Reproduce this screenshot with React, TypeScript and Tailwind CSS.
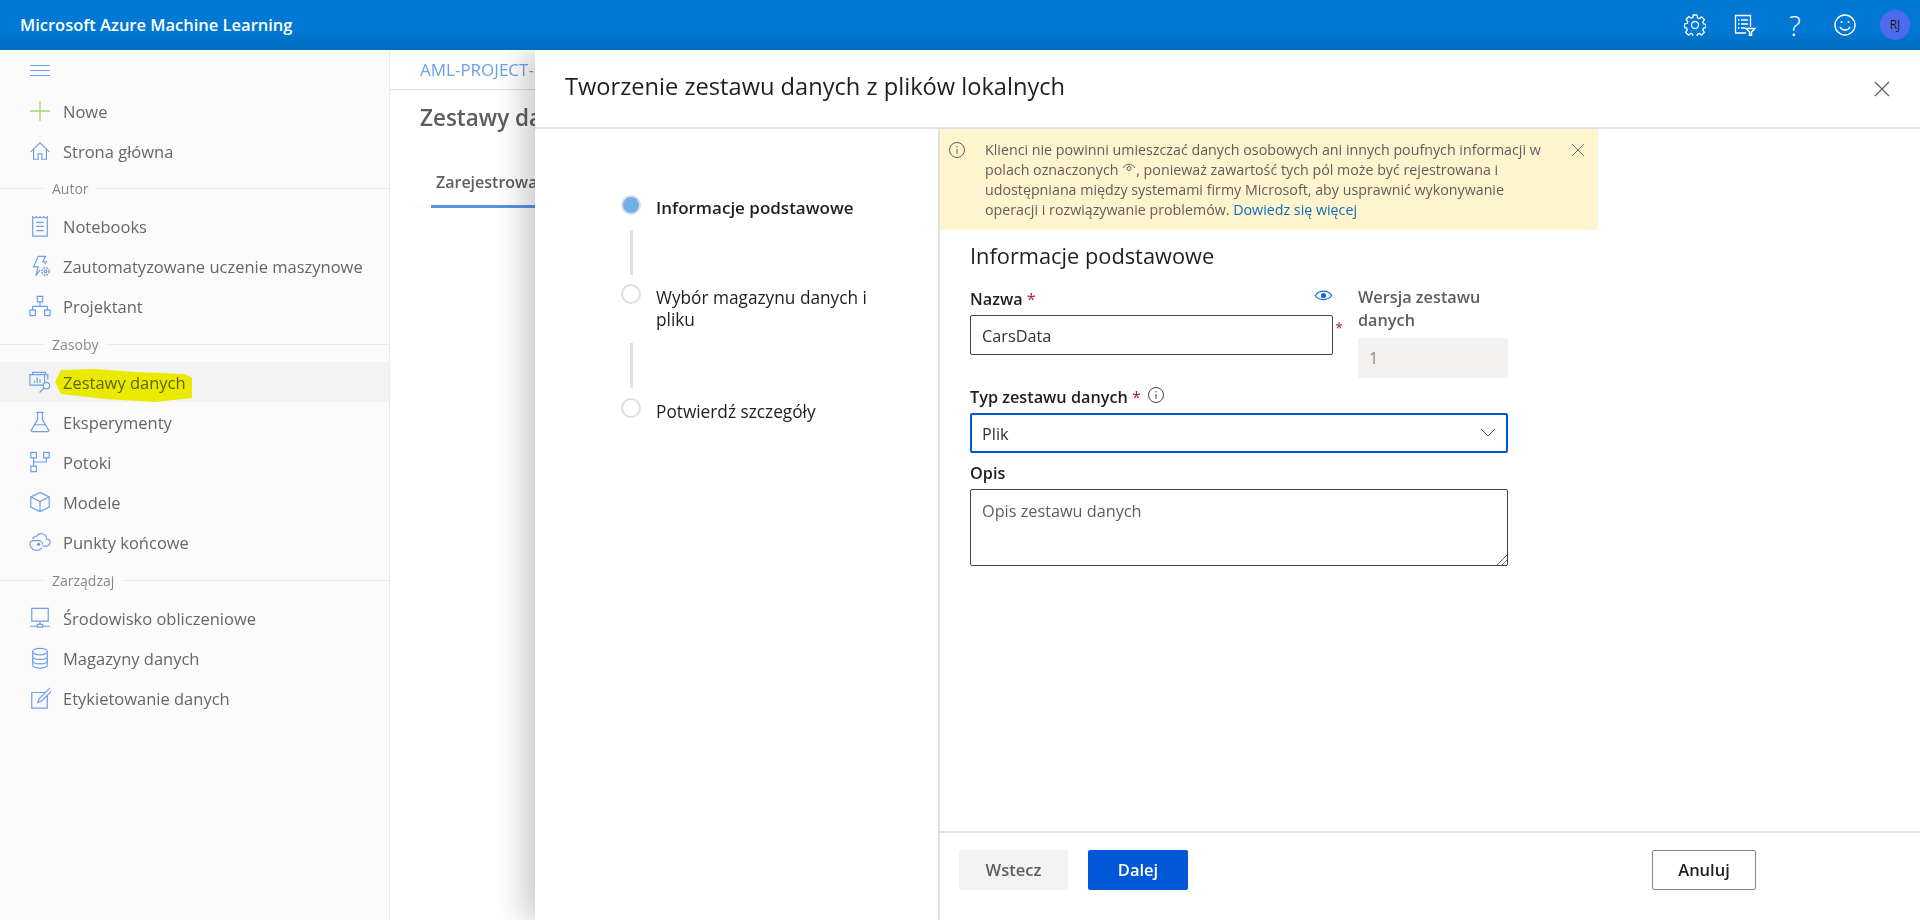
import type { ReactNode } from "react";

const font = "font-['Open_Sans','Noto_Sans',sans-serif]";

const Ic = ({ children, c = "#6f9fe8", s = 22 }: { children: ReactNode; c?: string; s?: number }) => (
  <svg width={s} height={s} viewBox="0 0 24 24" fill="none" stroke={c} strokeWidth="1.3">
    {children}
  </svg>
);

const icons: Record<string, ReactNode> = {
  plus: (
    <Ic c="#a8d57e">
      <path d="M12 1v22M1 12h22" strokeWidth="1.5" />
    </Ic>
  ),
  home: (
    <Ic>
      <path d="M2 13 12 3l10 10M5 10.500V21h5v-6h4v6h5V10.500" />
    </Ic>
  ),
  notebook: (
    <Ic>
      <path d="M4 3h16v20H4zM4 1v2M8 1v2M12 1v2M16 1v2M20 1v2M8 8h8M8 12.500h8M8 17h8" />
    </Ic>
  ),
  automl: (
    <Ic>
      <path d="M10 1.500h8l-3 6h4l-1.500 2.500M10 1.500 5 13h5L7.500 22.500l4.500-6" />
      <circle cx="18" cy="18" r="1.500" />
      <circle cx="18" cy="18" r="4" strokeDasharray="2 1.200" strokeWidth="1.600" />
    </Ic>
  ),
  designer: (
    <Ic>
      <path d="M9 1.500h6v6H9zM1 16.500h6v6H1zM17 16.500h6v6h-6zM12 7.500v5M4 16.500v-4h16v4" />
    </Ic>
  ),
  datasets: (
    <Ic>
      <path d="M4 4V1.500h14V4M1 4h16v11.500H1zM18 4h2.500v5M6 13v-2.500M9 13V7M12 13V9" />
      <circle cx="19" cy="16" r="3.500" fill="#f3f3f3" />
      <path d="m16.500 18.500-5 5" />
    </Ic>
  ),
  flask: (
    <Ic>
      <path d="M8 1.500h8M9.500 1.500V9L2.500 21a1 1 0 0 0 1 1.500h17a1 1 0 0 0 1-1.500L14.500 9V1.500M6 15h12" />
    </Ic>
  ),
  pipeline: (
    <Ic>
      <path d="M2 1.500h6v6H2zM16 1.500h6v6h-6zM2 16.500h6v6H2zM5 7.500v9M5 12h14V7.500" />
    </Ic>
  ),
  cube: (
    <Ic>
      <path d="m12 1.500 10 5v11l-10 5-10-5v-11zM2 6.500l10 5 10-5M12 11.500v11" />
    </Ic>
  ),
  endpoint: (
    <Ic>
      <path d="M4 9c.5-2 2-3 4-3 1.500-2.500 4-3.500 6.500-3 2.500.5 4.500 2.500 4.500 5.500 2.500.2 4 2 4 4s-2 4-4.500 4H15" />
      <circle cx="10.500" cy="14.500" r="1.800" fill="#6f9fe8" stroke="none" />
      <path d="M15 15a4.500 4.500 0 0 0-4.500-4.500H5C2.500 10.500 1 12.500 1 14.500s2 5.500 6 6.500c3 .5 5 0 7-2.500" />
    </Ic>
  ),
  compute: (
    <Ic>
      <path d="M3 1.500h18v14H3zM12 15.500v4M1 21h8M15 21h8M9 19h6v3H9z" />
    </Ic>
  ),
  storage: (
    <Ic>
      <ellipse cx="12" cy="5" rx="8" ry="3.500" />
      <path d="M4 5v15c0 1.500 3.500 3 8 3s8-1.500 8-3V5M4 10c0 2 3.500 3.500 8 3.500s8-1.500 8-3.500M4 15c0 2 3.500 3.500 8 3.500s8-1.500 8-3.500" />
    </Ic>
  ),
  label: (
    <Ic>
      <path d="M18 6H3v17h17V9" />
      <path d="m23 1-12 12-1.500 4 4-1.500 12-12" />
    </Ic>
  ),
};

const NavItem = ({ icon, label, active }: { icon: string; label: string; active?: boolean }) => (
  <div className={`flex h-10 items-center pl-7 ${active ? "bg-[#f3f3f3]" : ""}`}>
    <span className="mr-[11px] flex w-6 items-center justify-center">{icons[icon]}</span>
    <span className="pt-[3px] text-[16.500px] text-[#666]">{label}</span>
  </div>
);

const Section = ({ label, h }: { label: string; h: string }) => (
  <div className={`flex items-center ${h}`}>
    <div className="h-px w-11 bg-[#ebebeb]" />
    <span className="px-2 text-[14px] text-[#8a8886]">{label}</span>
    <div className="h-px flex-1 bg-[#ebebeb]" />
  </div>
);

const Sidebar = () => (
  <aside className="relative w-[390px] shrink-0 border-r border-[#ebebeb] bg-[#fbfbfb]">
    <div className="flex h-[41px] items-center pl-[30px]">
      <div className="flex w-5 flex-col gap-[4px]">
        <div className="h-px bg-[#6f9fe8]" />
        <div className="h-px bg-[#6f9fe8]" />
        <div className="h-px bg-[#6f9fe8]" />
      </div>
    </div>
    <NavItem icon="plus" label="Nowe" />
    <NavItem icon="home" label="Strona główna" />
    <Section label="Autor" h="h-[35px]" />
    <NavItem icon="notebook" label="Notebooks" />
    <NavItem icon="automl" label="Zautomatyzowane uczenie maszynowe" />
    <NavItem icon="designer" label="Projektant" />
    <Section label="Zasoby" h="h-[36px]" />
    <NavItem icon="datasets" label="Zestawy danych" active />
    <NavItem icon="flask" label="Eksperymenty" />
    <NavItem icon="pipeline" label="Potoki" />
    <NavItem icon="cube" label="Modele" />
    <NavItem icon="endpoint" label="Punkty końcowe" />
    <Section label="Zarządzaj" h="h-[36px]" />
    <NavItem icon="compute" label="Środowisko obliczeniowe" />
    <NavItem icon="storage" label="Magazyny danych" />
    <NavItem icon="label" label="Etykietowanie danych" />
    {/* marker stroke over the active item */}
    <svg
      className="absolute left-[55px] top-[318px] mix-blend-multiply"
      width="138"
      height="35"
      viewBox="0 0 138 35"
    >
      <path d="M6 2 40 1 80 4 130 6 137 10 137 30 100 34 50 31 6 26 0 14Z" fill="#f6f600" />
    </svg>
  </aside>
);

const Step = ({ label, active, h }: { label: string; active?: boolean; h: string }) => (
  <div className={`flex ${h}`}>
    <div className={`h-5 w-5 shrink-0 rounded-full border-2 border-[#dedede] ${active ? "bg-[#70aee8]" : "bg-white"}`} />
    <div
      className={`ml-[15px] w-[230px] leading-[22px] text-[#201f1e] ${
        active ? "pt-[2px] text-[17px] font-semibold" : "pt-[3px] text-[17.250px]"
      }`}
    >
      {label}
    </div>
  </div>
);

const StepLine = () => <div className="ml-[9px] h-[45px] w-[3px] bg-[#e1e1e1]" />;

const Stepper = () => (
  <div className="w-[405px] shrink-0 border-r-2 border-[#e1e1e1] pl-[86px] pt-[66px]">
    <Step label="Informacje podstawowe" active h="h-[35px]" />
    <StepLine />
    <div className="h-[9px]" />
    <Step label="Wybór magazynu danych i pliku" h="h-[59px]" />
    <StepLine />
    <div className="h-[10px]" />
    <Step label="Potwierdź szczegóły" h="h-[26px]" />
  </div>
);

const Star = () => <span className="font-normal text-[#a4262c]"> *</span>;

const Banner = () => (
  <div className="flex h-[101px] w-[658px] bg-[#fff4ce] pl-[7px] pt-[11px]">
    <svg className="ml-[1px] mt-px shrink-0" width="18" height="18" viewBox="0 0 18 18" fill="none" stroke="#605e5c">
      <circle cx="9" cy="9" r="7.500" />
      <path d="M9 8v5M9 5v1.500" />
    </svg>
    <p className="ml-[19px] w-[570px] text-[14.250px] leading-[20px] text-[#605e5c]">
      Klienci nie powinni umieszczać danych osobowych ani innych poufnych informacji w polach oznaczonych{" "}
      <svg className="inline align-[2px]" width="14" height="10" viewBox="0 0 14 10" fill="none" stroke="#605e5c">
        <path d="M1 5c3-5 9-5 12 0" />
        <circle cx="7" cy="5.500" r="2" />
      </svg>
      , ponieważ zawartość tych pól może być rejestrowana i udostępniana między systemami firmy Microsoft, aby usprawnić
      wykonywanie operacji i rozwiązywanie problemów. <span className="text-[#0f6cbd]">Dowiedz się więcej</span>
    </p>
    <svg className="ml-[16px] mt-[3px] shrink-0" width="14" height="14" viewBox="0 0 14 14" stroke="#7a7a7a">
      <path d="M1 1l12 12M13 1 1 13" />
    </svg>
  </div>
);

const Form = () => (
  <div className="w-[538px] box-content pl-[30px]">
    <h2 className="mt-[12px] text-[21.800px] leading-[28px] text-[#201f1e]">Informacje podstawowe</h2>
    <div className="mt-[13px] flex">
      <div className="relative w-[363px]">
        <div className="flex h-[32px] items-center justify-between pt-[1px] text-[16.250px] font-semibold text-[#201f1e]">
          <span>
            Nazwa
            <Star />
          </span>
          <svg width="19" height="11" viewBox="0 0 20 12" fill="none" stroke="#0f6cd8" strokeWidth="1.300" className="mb-[8px]">
            <path d="M1 6c4-6.500 14-6.500 18 0-4 6-14 6-18 0z" />
            <circle cx="10" cy="6" r="2.200" fill="#0f6cd8" />
          </svg>
        </div>
        <div className="flex h-[40px] items-center rounded-[2px] border border-[#444] px-[11px] pt-[2px] text-[16.250px] text-[#323130]">
          CarsData
        </div>
        <span className="absolute -right-[10px] top-[34px] text-[14px] text-[#a4262c]">*</span>
      </div>
      <div className="ml-[25px] w-[150px]">
        <div className="pt-[3px] text-[16.250px] font-semibold leading-[23px] text-[#605e5c]">Wersja zestawu danych</div>
        <div className="mt-[6px] flex h-[40px] items-center rounded-[2px] bg-[#f3f2f1] px-[11px] text-[16.250px] text-[#8a8886]">
          1
        </div>
      </div>
    </div>
    <div className="mt-[3px] flex h-[32px] items-center text-[16.250px] font-semibold text-[#201f1e]">
      <span>
        Typ zestawu danych
        <Star />
      </span>
      <svg className="mb-1 ml-[6px]" width="18" height="18" viewBox="0 0 18 18" fill="none" stroke="#444">
        <circle cx="9" cy="9" r="7.500" />
        <path d="M9 8v5M9 5v1.500" />
      </svg>
    </div>
    <div className="flex h-[40px] items-center justify-between rounded-[2px] border-2 border-[#0058d6] px-[10px] text-[16.250px] text-[#323130]">
      <span className="pt-[2px]">Plik</span>
      <svg width="16" height="10" viewBox="0 0 16 10" fill="none" stroke="#605e5c">
        <path d="m1 1 7 7 7-7" />
      </svg>
    </div>
    <div className="flex h-[36px] items-center pt-[5px] text-[16.250px] font-semibold text-[#201f1e]">Opis</div>
    <div className="relative h-[77px] rounded-[2px] border border-[#444] px-[11px] pt-[9px] text-[16.250px] text-[#605e5c]">
      Opis zestawu danych
      <svg className="absolute bottom-0 right-0" width="11" height="11" viewBox="0 0 11 11" stroke="#666">
        <path d="M1 11 11 1M6 11l5-5" />
      </svg>
    </div>
  </div>
);

const Footer = () => (
  <div className="flex h-[89px] items-start border-t-2 border-[#e1e1e1] pl-[19px] pr-[164px] pt-[17px]">
    <button className="h-10 w-[109px] rounded-[2px] bg-[#f3f3f3] text-[16.500px] font-semibold text-[#605e5c]">Wstecz</button>
    <button className="ml-[20px] h-10 w-[100px] rounded-[2px] bg-[#0058d6] text-[16.500px] font-semibold text-white">Dalej</button>
    <button className="ml-auto h-10 w-[104px] rounded-[2px] border border-[#8a8886] bg-white text-[16.500px] font-semibold text-[#201f1e]">
      Anuluj
    </button>
  </div>
);

const Drawer = () => (
  <div className="absolute bottom-0 left-[535px] right-0 top-[50px] flex flex-col bg-white shadow-[-12px_0_28px_rgba(0,0,0,0.2)]">
    <div className="flex h-[79px] shrink-0 items-center justify-between border-b-2 border-[#e1e1e1] pl-[30px] pr-[30px]">
      <h1 className="pb-[4px] text-[23.650px] text-[#201f1e]">Tworzenie zestawu danych z plików lokalnych</h1>
      <svg width="16" height="16" viewBox="0 0 16 16" stroke="#605e5c" strokeWidth="1.200">
        <path d="m1 1 14 14M15 1 1 15" />
      </svg>
    </div>
    <div className="flex min-h-0 flex-1">
      <Stepper />
      <div className="flex flex-1 flex-col">
        <div className="flex-1">
          <Banner />
          <Form />
        </div>
        <Footer />
      </div>
    </div>
  </div>
);

const Underlay = () => (
  <main className="flex-1 bg-white">
    <div className="flex h-10 items-center border-b border-[#e1e1e1] pl-[30px] text-[17px] text-[#6f9fe8]">AML-PROJECT-1</div>
    <div className="pl-[30px] pt-[11px] text-[22.500px] font-semibold text-[#605e5c]">Zestawy danych</div>
    <div className="ml-[41px] mt-[35px] w-[200px] border-b-[3px] border-[#5b93e0] pb-[11px] pl-[5px] text-[16px] font-semibold text-[#605e5c]">
      Zarejestrowane
    </div>
  </main>
);

const TopBar = () => (
  <header className="relative z-10 flex h-[50px] shrink-0 items-center justify-between bg-gradient-to-b from-[#0078d4] from-60% to-[#006cc0] pl-5 pr-[10px] text-white">
    <span className="text-[16.500px] font-semibold">Microsoft Azure Machine Learning</span>
    <div className="flex items-center">
      <span className="flex w-[50px] justify-center">
        <svg width="22" height="22" viewBox="0 0 22 22" fill="none" stroke="white" strokeWidth="1.300" strokeLinejoin="round">
          <circle cx="11" cy="11" r="3.500" />
          <path d="M9 1h4l.5 2.900 1.700.7 2.400-1.700 2.800 2.800-1.700 2.400.7 1.700 2.600.5v3.400l-2.600.5-.7 1.700 1.700 2.400-2.800 2.800-2.400-1.700-1.700.7-.5 2.600H9l-.5-2.600-1.700-.7-2.400 1.700-2.800-2.800 1.700-2.400-.7-1.700L.5 13.300V9.900l2.600-.5.7-1.700-1.700-2.400 2.800-2.800 2.400 1.700 1.700-.7z" />
        </svg>
      </span>
      <span className="flex w-[50px] justify-center">
        <svg width="22" height="22" viewBox="0 0 22 22" fill="none" stroke="white" strokeWidth="1.300">
          <path d="M12 19H1.500V1.500h15V13" />
          <path d="M4 6h1.500M7 6h7M4 10h1.500M7 10h7M4 14h1.500M7 14h4" />
          <path d="M12 14.500h9l-3.500 3.500v3.500h-2V18z" strokeWidth="1.500" />
        </svg>
      </span>
      <span className="w-[50px] text-center text-[28px] font-light leading-none">?</span>
      <span className="flex w-[50px] justify-center">
        <svg width="22" height="22" viewBox="0 0 22 22" fill="none" stroke="white" strokeWidth="1.400">
          <circle cx="11" cy="11" r="10" />
          <path d="M6 13c2 4 8 4 10 0" />
          <circle cx="7.500" cy="8" r="1" fill="white" stroke="none" />
          <circle cx="14.500" cy="8" r="1" fill="white" stroke="none" />
        </svg>
      </span>
      <div className="ml-[10px] flex h-[30px] w-[30px] items-center justify-center rounded-full bg-[#4f6bed] text-[12px] text-[#1b1a19]">
        RJ
      </div>
    </div>
  </header>
);

export default function App() {
  return (
    <div className={`relative flex h-[920px] w-[1920px] flex-col overflow-hidden bg-white ${font}`}>
      <TopBar />
      <div className="flex min-h-0 flex-1">
        <Sidebar />
        <Underlay />
      </div>
      <Drawer />
    </div>
  );
}
